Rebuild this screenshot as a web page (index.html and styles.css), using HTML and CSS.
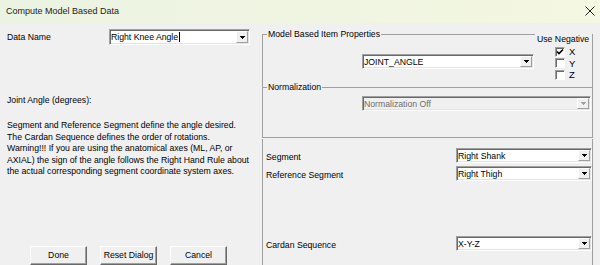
FILE: index.html
```html
<!DOCTYPE html>
<html lang="en">
<head>
  <meta charset="UTF-8" />
  <title>Compute Model Based Data</title>
  <link rel="stylesheet" href="styles.css">
</head>
<body>
  <div class="titlebar">
    <span class="title">Compute Model Based Data</span>
    <svg class="close" width="10" height="10" viewBox="0 0 10 10">
      <path d="M0.5 0.5L9.5 9.5M9.5 0.5L0.5 9.5" stroke="#222" stroke-width="1" fill="none" />
    </svg>
  </div>

  <div class="dialog">
    <!-- Left side: name, help text and dialog buttons -->
    <div class="left">
      <div class="name-row">
        <label>Data Name</label>
        <div class="combo combo-name">
          <span class="value">Right Knee Angle<span class="caret"></span></span>
          <span class="arrow"><svg width="5" height="3" viewBox="0 0 5 3" shape-rendering="crispEdges"><path d="M0 0h5v1H0zM1 1h3v1H1zM2 2h1v1H2z" /></svg></span>
        </div>
      </div>

      <p class="heading">Joint Angle (degrees):</p>
      <p class="desc">
        Segment and Reference Segment define the angle desired.<br>
        The Cardan Sequence defines the order of rotations.<br>
        Warning!!! If you are using the anatomical axes (ML, AP, or<br>
        AXIAL) the sign of the angle follows the Right Hand Rule about<br>
        the actual corresponding segment coordinate system axes.
      </p>

      <div class="buttons">
        <button class="btn">Done</button>
        <button class="btn">Reset Dialog</button>
        <button class="btn">Cancel</button>
      </div>
    </div>

    <!-- Right side: property groups -->
    <div class="right">
      <fieldset class="group group-model">
        <legend>Model Based Item Properties</legend>
        <div class="model-body">
          <div class="combo combo-type">
            <span class="value">JOINT_ANGLE</span>
            <span class="arrow"><svg width="5" height="3" viewBox="0 0 5 3" shape-rendering="crispEdges"><path d="M0 0h5v1H0zM1 1h3v1H1zM2 2h1v1H2z" /></svg></span>
          </div>
          <div class="negative">
            <div class="neg-title">Use Negative</div>
            <div class="check-row"><span class="check"><svg width="8" height="8" viewBox="0 0 8 8"><path d="M1 3.5L3 5.5L7 1.5" stroke="#000" stroke-width="1.6" fill="none" /></svg></span>X</div>
            <div class="check-row"><span class="check"></span>Y</div>
            <div class="check-row"><span class="check"></span>Z</div>
          </div>
        </div>
      </fieldset>

      <fieldset class="group group-norm">
        <legend>Normalization</legend>
        <div class="combo combo-norm disabled">
          <span class="value">Normalization Off</span>
          <span class="arrow"><svg width="5" height="3" viewBox="0 0 5 3" shape-rendering="crispEdges"><path d="M0 0h5v1H0zM1 1h3v1H1zM2 2h1v1H2z" /></svg></span>
        </div>
      </fieldset>

      <div class="segments">
        <div class="seg-row">
          <span class="seg-label">Segment</span>
          <div class="combo combo-seg">
            <span class="value">Right Shank</span>
            <span class="arrow"><svg width="5" height="3" viewBox="0 0 5 3" shape-rendering="crispEdges"><path d="M0 0h5v1H0zM1 1h3v1H1zM2 2h1v1H2z" /></svg></span>
          </div>
        </div>
        <div class="seg-row">
          <span class="seg-label">Reference Segment</span>
          <div class="combo combo-seg">
            <span class="value">Right Thigh</span>
            <span class="arrow"><svg width="5" height="3" viewBox="0 0 5 3" shape-rendering="crispEdges"><path d="M0 0h5v1H0zM1 1h3v1H1zM2 2h1v1H2z" /></svg></span>
          </div>
        </div>
        <div class="seg-row cardan">
          <span class="seg-label">Cardan Sequence</span>
          <div class="combo combo-seg">
            <span class="value">X-Y-Z</span>
            <span class="arrow"><svg width="5" height="3" viewBox="0 0 5 3" shape-rendering="crispEdges"><path d="M0 0h5v1H0zM1 1h3v1H1zM2 2h1v1H2z" /></svg></span>
          </div>
        </div>
      </div>
    </div>
  </div>
</body>
</html>
```

FILE: styles.css
```css
:root {
  --face: #f0f0f0;
  --line: #a0a0a0;
  --shadow: #696969;
  --light: #e3e3e3;
}

* {
  box-sizing: border-box;
}

html, body {
  margin: 0;
  height: 100%;
  overflow: hidden;
}

body {
  background: var(--face);
  font-family: "Liberation Sans", Arial, sans-serif;
  font-size: 8.7px;
  color: #000;
}

/* Window caption */
.titlebar {
  height: 23px;
  display: flex;
  align-items: center;
  justify-content: space-between;
  padding: 0 5px 1px 6px;
  background: linear-gradient(90deg, #ebf3e2, #f4f7e1);
  font-size: 9px;
  color: #1b1b1b;
}

.dialog {
  display: grid;
  grid-template-columns: 262px 331px;
  height: 242px;
}

/* Left column */
.left {
  display: flex;
  flex-direction: column;
  padding: 6px 0 0 7px;
}

.name-row {
  display: flex;
  align-items: center;
  height: 16px;
}

.name-row label {
  width: 102px;
}

.heading {
  margin: 49px 0 0;
  line-height: 12px;
}

.desc {
  margin: 14px 0 0;
  line-height: 11.5px;
  white-space: nowrap;
}

.buttons {
  margin-top: auto;
  padding-left: 23px;
  display: flex;
  gap: 13px;
}

.btn {
  width: 57px;
  height: 19px;
  padding: 0 0 1px;
  font: inherit;
  color: #000;
  background: var(--face);
  border: 1px solid;
  border-color: #fff var(--shadow) var(--shadow) #fff;
  box-shadow: inset -1px -1px 0 var(--line);
}

/* Combo boxes */
.combo {
  display: flex;
  align-items: stretch;
  height: 15px;
  background: #fff;
  border: 1px solid;
  border-color: var(--line) #fff #fff var(--line);
  box-shadow: inset 1px 1px 0 var(--shadow), inset -1px -1px 0 var(--light);
}

.combo .value {
  flex: 1;
  display: flex;
  align-items: center;
  padding-left: 1px;
  white-space: nowrap;
}

.combo .arrow {
  width: 12px;
  margin: 1px 1px 1px 0;
  display: flex;
  align-items: center;
  justify-content: center;
  background: var(--face);
  border: 1px solid;
  border-color: #fff var(--line) var(--line) #fff;
}

.combo .arrow path {
  fill: #000;
}

.combo.disabled {
  background: var(--face);
  color: #6d6d6d;
}

.combo.disabled .arrow path {
  fill: var(--line);
}

.combo-name {
  width: 141px;
  height: 16px;
}

.caret {
  display: inline-block;
  width: 1px;
  height: 10px;
  margin-left: 1px;
  background: #000;
}

/* Group boxes */
.right {
  display: flex;
  flex-direction: column;
  padding-top: 5px;
}

.group {
  margin: 0;
  padding: 0;
  min-width: 0;
  border: 1px solid var(--line);
  border-bottom: none;
}

.group legend {
  margin-left: 4px;
  padding: 0 1px;
  line-height: 13px;
}

.model-body {
  display: flex;
  height: 46px;
}

.combo-type {
  width: 172px;
  margin: 13px 0 0 99px;
}

.negative {
  width: 57px;
  height: 48px;
  margin: -8px 0 0 auto;
  padding-left: 2px;
  background: var(--face);
}

.neg-title {
  line-height: 13px;
}

.check-row {
  display: flex;
  align-items: center;
  height: 11.5px;
  padding-left: 18px;
  font-size: 9.5px;
}

.check {
  width: 10px;
  height: 10px;
  margin-right: 4px;
  display: flex;
  align-items: center;
  justify-content: center;
  background: #fff;
  border: 1px solid;
  border-color: var(--line) #fff #fff var(--line);
  box-shadow: inset 1px 1px 0 var(--shadow);
}

.group-norm {
  margin-top: -6px;
  border-bottom: 1px solid var(--line);
}

.combo-norm {
  width: 229px;
  margin: 2px 0 26px 99px;
}

/* Segment selection panel */
.segments {
  flex: 1;
  margin-top: 1px;
  padding-top: 9px;
  border-left: 1px solid var(--line);
  border-right: 1px solid var(--line);
}

.seg-row {
  display: flex;
  align-items: center;
}

.seg-row + .seg-row {
  margin-top: 3px;
}

.seg-row.cardan {
  margin-top: 55px;
}

.seg-label {
  padding-left: 3px;
  padding-top: 2px;
}

.combo-seg {
  width: 136px;
  margin-left: auto;
}
```
